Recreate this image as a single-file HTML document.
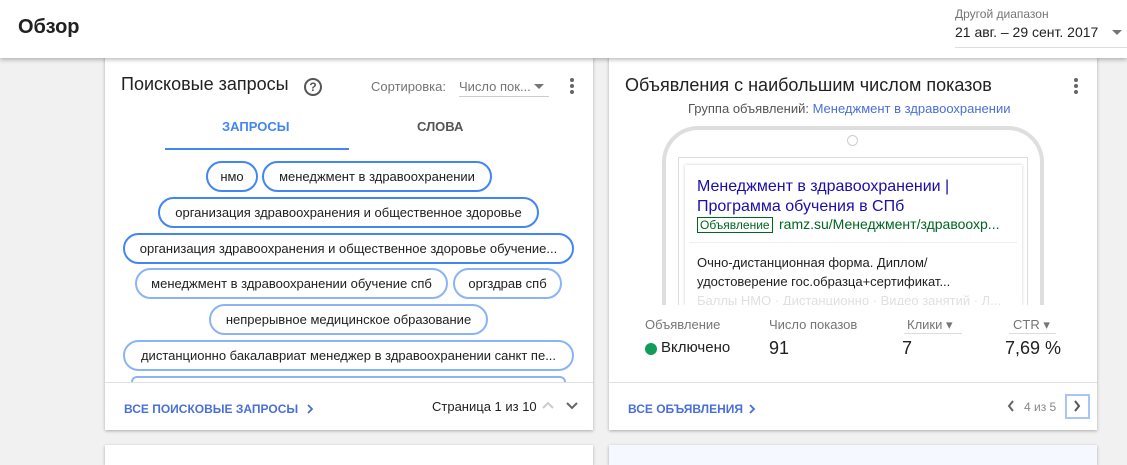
<!DOCTYPE html>
<html><head><meta charset="utf-8"><style>
*{box-sizing:border-box;margin:0;padding:0}
body{width:1127px;height:451px;overflow:hidden;background:#f1f1f1;font-family:"Liberation Sans",Roboto,sans-serif;position:relative;color:#212121}
.a{position:absolute;white-space:nowrap}
.hdr{position:absolute;left:0;top:0;width:1127px;height:58px;background:#fff;box-shadow:0 2px 4px rgba(0,0,0,.25);z-index:2}
.card{position:absolute;background:#fff;box-shadow:0 1px 3px rgba(0,0,0,.3)}
.chip{position:absolute;height:31px;border:2px solid #8ab4f8;border-radius:16px;font-size:13px;line-height:27px;text-align:center;color:#212121;background:#fff}
.chip.d{border-color:#4285f4}
.lbl{font-size:13px;color:#757575}
svg{position:absolute}
</style></head><body>
<div class="hdr">
<div class="a" style="left:18px;top:16px;font-size:20px;font-weight:bold;color:#212121">Обзор</div>
<div class="a" style="left:955px;top:7px;font-size:12px;color:#757575">Другой диапазон</div>
<div class="a" style="left:955px;top:24px;font-size:14px;color:#212121">21 авг. – 29 сент. 2017</div>
<div class="a" style="left:1112px;top:30px;width:0;height:0;border-left:5px solid transparent;border-right:5px solid transparent;border-top:5px solid #757575"></div>
<div class="a" style="left:955px;top:47px;width:172px;height:1px;background:#ddd"></div>
</div>

<div class="card" style="left:105px;top:50px;width:488px;height:380px"></div>
<div class="card" style="left:609px;top:50px;width:488px;height:380px"></div>
<div class="card" style="left:105px;top:445px;width:488px;height:20px"></div>
<div class="card" style="left:609px;top:445px;width:488px;height:20px;background:#f5f9ff"></div>

<!-- left card -->
<div class="a" style="left:121px;top:74px;font-size:18px;color:#212121">Поисковые запросы</div>
<div class="a" style="left:304px;top:78px;width:18px;height:18px;border:2px solid #555;border-radius:50%;font-size:12px;font-weight:bold;line-height:14px;text-align:center;color:#555">?</div>
<div class="a" style="left:371px;top:79px;font-size:13px;color:#757575">Сортировка:</div>
<div class="a" style="left:459px;top:79px;font-size:13px;color:#757575">Число пок...</div>
<div class="a" style="left:459px;top:96px;width:90px;height:1px;background:#ccc"></div>
<div class="a" style="left:534px;top:84px;border-left:5px solid transparent;border-right:5px solid transparent;border-top:5px solid #757575"></div>
<div class="a" style="left:570px;top:78px;width:4px;height:4px;border-radius:2px;background:#666;box-shadow:0 6px 0 #666,0 12px 0 #666"></div>
<div class="a" style="left:222px;top:119px;font-size:13px;font-weight:bold;color:#4285f4">ЗАПРОСЫ</div>
<div class="a" style="left:417px;top:119px;font-size:13px;font-weight:bold;color:#555">СЛОВА</div>
<div class="a" style="left:165px;top:148px;width:184px;height:2px;background:#4285f4"></div>

<div class="chip d" style="left:206px;top:161px;width:52px">нмо</div>
<div class="chip d" style="left:262px;top:161px;width:230px">менеджмент в здравоохранении</div>
<div class="chip d" style="left:158px;top:197px;width:381px">организация здравоохранения и общественное здоровье</div>
<div class="chip d" style="left:123px;top:233px;width:451px">организация здравоохранения и общественное здоровье обучение...</div>
<div class="chip" style="left:135px;top:268px;width:313px">менеджмент в здравоохранении обучение спб</div>
<div class="chip" style="left:453px;top:268px;width:109px">оргздрав спб</div>
<div class="chip" style="left:209px;top:304px;width:279px">непрерывное медицинское образование</div>
<div class="chip" style="left:123px;top:340px;width:451px">дистанционно бакалавриат менеджер в здравоохранении санкт пе...</div>
<div class="a" style="left:131px;top:376px;width:435px;height:6px;border:2px solid #8ab4f8;border-bottom:none;border-radius:16px 16px 0 0;overflow:hidden"></div>
<div class="a" style="left:105px;top:382px;width:488px;height:1px;background:#e0e0e0"></div>
<div class="a" style="left:124px;top:402px;font-size:12px;font-weight:bold;color:#4a6fd6">ВСЕ ПОИСКОВЫЕ ЗАПРОСЫ</div>
<svg style="left:306px;top:404px" width="8" height="10" viewBox="0 0 8 10"><path d="M2 1l4 4-4 4" fill="none" stroke="#4a6fd6" stroke-width="1.8"/></svg>
<div class="a" style="left:432px;top:399px;font-size:13px;color:#212121">Страница 1 из 10</div>
<svg style="left:542px;top:401px" width="12" height="8" viewBox="0 0 12 8"><path d="M1 7l5-5 5 5" fill="none" stroke="#ccc" stroke-width="2"/></svg>
<svg style="left:566px;top:402px" width="12" height="8" viewBox="0 0 12 8"><path d="M1 1l5 5 5-5" fill="none" stroke="#666" stroke-width="2"/></svg>

<!-- right card -->
<div class="a" style="left:625px;top:75px;font-size:18px;color:#212121">Объявления с наибольшим числом показов</div>
<div class="a" style="left:1074px;top:78px;width:4px;height:4px;border-radius:2px;background:#666;box-shadow:0 6px 0 #666,0 12px 0 #666"></div>
<div class="a" style="left:688px;top:101px;font-size:13px;color:#555">Группа объявлений: <span style="color:#4a6fd6">Менеджмент в здравоохранении</span></div>
<div class="a" style="left:662px;top:126px;width:382px;height:200px;border:4px solid #dedede;border-bottom:none;border-radius:36px 36px 0 0"></div>
<div class="a" style="left:847px;top:135px;width:11px;height:11px;border:1px solid #ccc;border-radius:50%"></div>
<div class="a" style="left:678px;top:157px;width:350px;height:150px;border:1px solid #ddd;border-bottom:none"></div>
<div class="a" style="left:685px;top:165px;width:337px;height:140px;background:#fff;box-shadow:0 0 3px rgba(0,0,0,.2)"></div>
<div class="a" style="left:697px;top:177px;font-size:16px;line-height:20px;color:#1a0dab">Менеджмент в здравоохранении |<br>Программа обучения в СПб</div>
<div class="a" style="left:697px;top:217px;font-size:12px;color:#006621;border:1px solid #006621;padding:0 2px;line-height:14px">Объявление</div>
<div class="a" style="left:779px;top:216px;font-size:14px;color:#006621">ramz.su/Менеджмент/здравоохр...</div>
<div class="a" style="left:689px;top:242px;width:328px;height:1px;background:#eee"></div>
<div class="a" style="left:697px;top:253px;font-size:13px;line-height:19px;color:#212121">Очно-дистанционная форма. Диплом/<br>удостоверение гос.образца+сертификат...<br><span style="color:#e0e0e0">Баллы НМО · Дистанционно · Видео занятий · Л...</span></div>
<div class="a" style="left:609px;top:305px;width:488px;height:77px;background:#fff"></div>
<div class="a lbl" style="left:645px;top:317px">Объявление</div>
<div class="a lbl" style="left:769px;top:317px">Число показов</div>
<div class="a lbl" style="left:907px;top:317px">Клики ▾</div>
<div class="a" style="left:904px;top:333px;width:58px;height:1px;background:#ddd"></div>
<div class="a lbl" style="left:1013px;top:317px">CTR ▾</div>
<div class="a" style="left:1009px;top:333px;width:47px;height:1px;background:#ddd"></div>
<div class="a" style="left:645px;top:343px;width:12px;height:12px;border-radius:50%;background:#0f9d58"></div>
<div class="a" style="left:661px;top:339px;font-size:15px">Включено</div>
<div class="a" style="left:769px;top:338px;font-size:18px">91</div>
<div class="a" style="left:902px;top:338px;font-size:18px">7</div>
<div class="a" style="left:1005px;top:338px;font-size:18px">7,69 %</div>
<div class="a" style="left:609px;top:382px;width:488px;height:1px;background:#e0e0e0"></div>
<div class="a" style="left:628px;top:402px;font-size:12px;font-weight:bold;color:#4a6fd6">ВСЕ ОБЪЯВЛЕНИЯ</div>
<svg style="left:748px;top:404px" width="8" height="10" viewBox="0 0 8 10"><path d="M2 1l4 4-4 4" fill="none" stroke="#4a6fd6" stroke-width="1.8"/></svg>
<svg style="left:1007px;top:400px" width="8" height="12" viewBox="0 0 8 12"><path d="M6 1L2 6l4 5" fill="none" stroke="#666" stroke-width="2"/></svg>
<div class="a" style="left:1024px;top:400px;font-size:12px;color:#888">4 из 5</div>
<div class="a" style="left:1065px;top:394px;width:25px;height:25px;border:2px solid #a8c4f8"></div>
<svg style="left:1073px;top:400px" width="8" height="12" viewBox="0 0 8 12"><path d="M2 1l4 5-4 5" fill="none" stroke="#555" stroke-width="2"/></svg>
</body></html>
